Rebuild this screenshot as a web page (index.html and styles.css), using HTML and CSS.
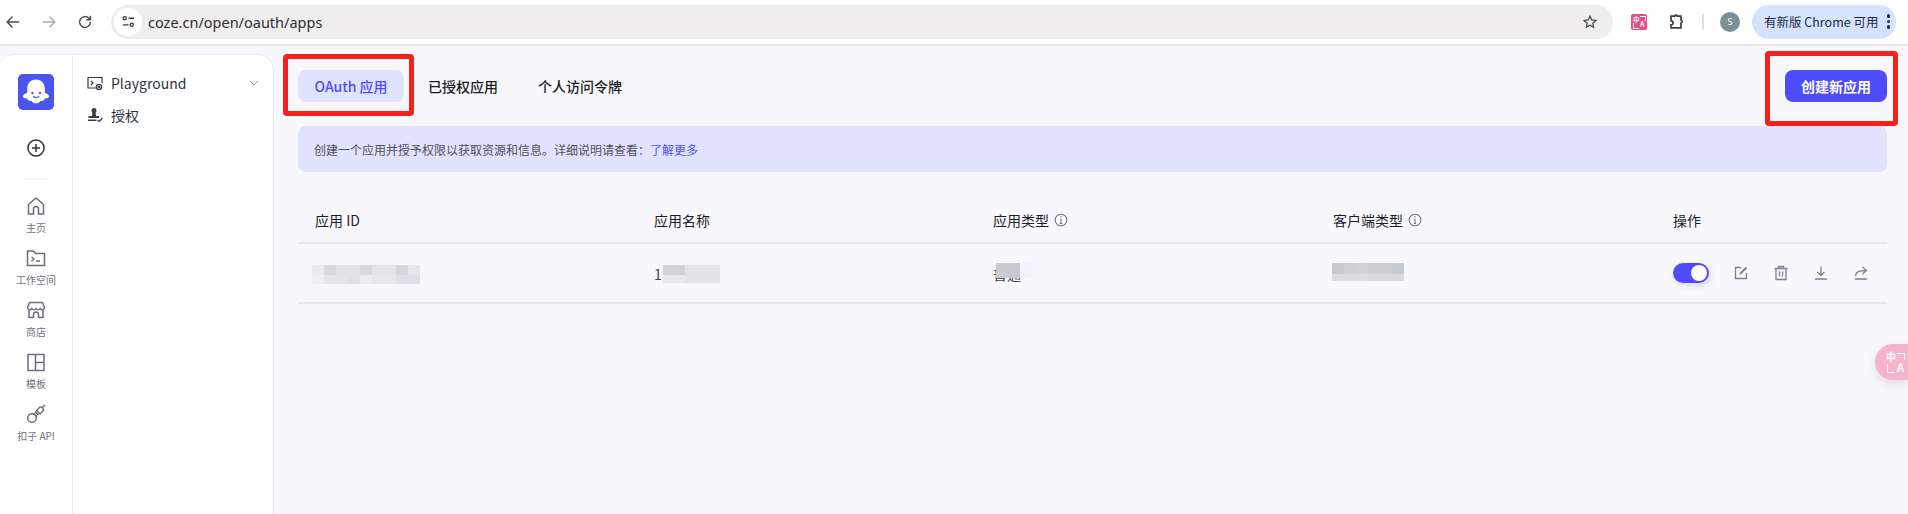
FILE: index.html
```html
<!DOCTYPE html>
<html lang="zh-CN">
<head>
    <meta charset="UTF-8">
    <title>coze.cn/open/oauth/apps</title>
    <link rel="stylesheet" href="styles.css">
</head>
<body>
    <header class="toolbar">
        <svg class="tb-icon first" viewBox="0 0 20 20"><path d="M17 10H4M9.500 4 3.500 10l6 6"/></svg>
        <svg class="tb-icon dim" viewBox="0 0 20 20"><path d="M3 10h13M10.500 4l6 6-6 6"/></svg>
        <svg class="tb-icon" viewBox="0 0 20 20"><path d="M16 10a6 6 0 1 1-1.800-4.300L16 7.500M16 3v4.500h-4.500"/></svg>
        <div class="omnibox">
            <span class="site-btn">
                <svg viewBox="0 0 16 16"><circle cx="4" cy="4.500" r="1.700"/><path d="M8 4.500h6M2 11.500h6"/><circle cx="11.500" cy="11.500" r="1.700"/></svg>
            </span>
            <span class="url">coze.cn/open/oauth/apps</span>
            <svg class="star" viewBox="0 0 20 20"><path d="m10 2.800 2.200 4.700 5.100.6-3.800 3.500 1 5.100-4.500-2.600-4.500 2.600 1-5.100-3.800-3.500 5.100-.6z"/></svg>
        </div>
        <span class="ext-pink tr-icon"><b>中</b><i>A</i></span>
        <svg class="tb-icon puzzle" viewBox="0 0 20 20"><path d="M4.500 3.500h4a1.600 1.600 0 0 1 3 0h4v4.200a1.900 1.900 0 0 1 0 3.600v5.200H4.500v-3.300a2.200 2.200 0 0 0 0-4.400z"/></svg>
        <span class="tb-divider"></span>
        <span class="avatar">S</span>
        <div class="update-pill">
            <span>有新版 Chrome 可用</span>
            <span class="dots"><i></i><i></i><i></i></span>
        </div>
    </header>

    <div class="page">
        <nav class="rail">
            <span class="logo">
                <svg viewBox="0 0 36 36">
                    <path class="ghost" d="M18 5.500c-5.500 0-8.800 4-8.800 9v4.300c-1.600 1-4.400 1.800-4.200 3.800.2 1.700 2.500 2 4.100 1.700.4 2.200 2.500 3.100 4.100 2.400 1 1.500 3.300 2.800 4.800 2.800s3.800-1.300 4.800-2.800c1.600.7 3.700-.2 4.100-2.400 1.600.3 3.900 0 4.100-1.700.2-2-2.600-2.800-4.200-3.800v-4.300c0-5-3.300-9-8.800-9z"/>
                    <circle class="eye" cx="14.500" cy="19" r="1.200"/>
                    <circle class="eye" cx="22" cy="19" r="1.200"/>
                    <path class="smile" d="M15.500 22.500c1.500 1.400 3.800 1.400 5.300 0"/>
                </svg>
            </span>
            <svg class="plus" viewBox="0 0 20 20"><circle cx="10" cy="10" r="8"/><path d="M10 6v8M6 10h8"/></svg>
            <span class="rail-sep"></span>
            <a class="rail-item">
                <svg viewBox="0 0 20 20"><path d="M2.500 8.500 10 2l7.500 6.500V18H12.500v-5a2.500 2.500 0 0 0-5 0v5H2.500z"/></svg>
                <span>主页</span>
            </a>
            <a class="rail-item">
                <svg viewBox="0 0 20 20"><path d="M1.500 3h6l2 2.500h9V17.500h-17zM5.500 9l2.500 2-2.500 2M10 13h4"/></svg>
                <span>工作空间</span>
            </a>
            <a class="rail-item">
                <svg viewBox="0 0 20 20"><path d="M3.500 2.500h13l2 5a2.300 2.300 0 0 1-4.300 1 2.400 2.400 0 0 1-4.200 0 2.400 2.400 0 0 1-4.200 0 2.300 2.300 0 0 1-4.300-1zM3 10v7.500h4.500v-3a2.500 2.500 0 0 1 5 0v3H17V10"/></svg>
                <span>商店</span>
            </a>
            <a class="rail-item">
                <svg viewBox="0 0 20 20"><path d="M2 2.500h16v16H2zM9.500 2.500v16M9.500 10.500H18"/></svg>
                <span>模板</span>
            </a>
            <a class="rail-item">
                <svg viewBox="0 0 20 20"><circle cx="6" cy="14" r="4.300"/><path d="M7.500 9 11 12.500M9 7.500l3.500 3.500M10.500 6.500 14 3a3.200 3.200 0 0 1 3.500 3.500L14 10zM16.500 3.500 19 1"/></svg>
                <span>扣子 API</span>
            </a>
        </nav>

        <aside class="subnav">
            <a class="sub-item">
                <svg viewBox="0 0 16 16"><path d="M9 13H1V2.500h14V8M4 6l2 2-2 2"/><circle cx="12" cy="12" r="2.700"/><circle class="hub" cx="12" cy="12" r=".9"/></svg>
                <span>Playground</span>
                <svg class="chevron" viewBox="0 0 12 12"><path d="m2 4 4 4 4-4"/></svg>
            </a>
            <a class="sub-item">
                <svg class="stamp" viewBox="0 0 16 16"><circle cx="7" cy="3.500" r="2.500"/><path d="M5.500 5h3l.5 4h3v2H1.500V9H5zM1 12.500h8.500v1.500H1z"/><path class="tick" d="m10.500 13 1.700 1.500L15.500 11"/></svg>
                <span>授权</span>
            </a>
        </aside>

        <main class="content">
            <div class="topbar">
                <div class="tabs">
                    <a class="tab active">OAuth 应用</a>
                    <a class="tab">已授权应用</a>
                    <a class="tab">个人访问令牌</a>
                </div>
                <button class="create-btn">创建新应用</button>
            </div>

            <div class="notice">创建一个应用并授予权限以获取资源和信息。详细说明请查看：<a>了解更多</a></div>

            <div class="table-row table-head">
                <div>应用 ID</div>
                <div>应用名称</div>
                <div class="with-info">应用类型
                    <svg class="info" viewBox="0 0 12 12"><circle cx="6" cy="6" r="5"/><path d="M6 5.200V9M5 9h2M5.200 5.200H6"/><circle class="dot" cx="6" cy="3.200" r=".6"/></svg>
                </div>
                <div class="with-info">客户端类型
                    <svg class="info" viewBox="0 0 12 12"><circle cx="6" cy="6" r="5"/><path d="M6 5.200V9M5 9h2M5.200 5.200H6"/><circle class="dot" cx="6" cy="3.200" r=".6"/></svg>
                </div>
                <div>操作</div>
            </div>

            <div class="table-row table-body">
                <div><span class="mosaic mosaic-id"></span></div>
                <div class="low-cell">1<span class="mosaic mosaic-name"></span></div>
                <div class="low-cell type-cell">普通<span class="mosaic mosaic-type"></span></div>
                <div><span class="mosaic mosaic-client"></span></div>
                <div class="actions">
                    <span class="toggle"></span>
                    <svg viewBox="0 0 16 16"><path d="M8 2.500H2.500v11h11V8"/><path class="pen" d="M7 9l6.500-6.500"/></svg>
                    <svg viewBox="0 0 16 16"><path d="M1.500 3.500h13M5.500 3.500V1.500h5v2M3 3.500v11h10v-11M6.500 6.500v5M9.500 6.500v5"/></svg>
                    <svg viewBox="0 0 16 16"><path d="M8 1.500v8.500M4.500 7 8 10.500 11.500 7M2 14h12"/></svg>
                    <svg viewBox="0 0 16 16"><path d="M2 14h12M2.500 11c0-3.500 3-5.500 10-5.500M9.500 2l4 3.500-4 3.500"/></svg>
                </div>
            </div>
        </main>
    </div>

    <span class="mark mark-tab"></span>
    <span class="mark mark-btn"></span>
    <span class="float-translate tr-icon"><b>中</b><i>A</i></span>
</body>
</html>
```

FILE: styles.css
```css
* {
    box-sizing: border-box;
}
html, body {
    height: 100%;
}
body {
    margin: 0;
    background: #f7f7fc;
    font-family: "Noto Sans CJK SC", "Noto Sans", sans-serif;
    color: #1c1d23;
    overflow: hidden;
}

/* browser chrome */
.toolbar {
    height: 46px;
    padding: 5px 12px 6px 4px;
    display: flex;
    align-items: center;
    background: #fff;
    border-bottom: 2px solid #e6e6e8;
}
.tb-icon {
    width: 18px;
    height: 18px;
    margin: 0 9px;
    flex: none;
    fill: none;
    stroke: #4a4c50;
    stroke-width: 1.6;
}
.tb-icon.first {
    margin-left: 0;
}
.tb-icon.dim {
    stroke: #a9abaf;
}
.omnibox {
    flex: 1;
    height: 34px;
    margin-left: 8px;
    padding: 0 15px 0 3px;
    display: flex;
    align-items: center;
    background: #efedee;
    border-radius: 17px;
}
.site-btn {
    width: 28px;
    height: 28px;
    display: flex;
    align-items: center;
    justify-content: center;
    background: #fff;
    border-radius: 50%;
}
.site-btn svg {
    width: 15px;
    height: 15px;
    fill: none;
    stroke: #3c3e42;
    stroke-width: 1.4;
}
.url {
    margin-left: 6px;
    flex: 1;
    font-family: "Noto Sans", sans-serif;
    font-size: 14.500px;
    color: #2c2e32;
}
.star {
    width: 16px;
    height: 16px;
    fill: none;
    stroke: #45474b;
    stroke-width: 1.600;
}

/* translate icon: text plus two corner brackets */
.tr-icon {
    color: #fff;
    line-height: 1;
}
.tr-icon b,
.tr-icon i {
    position: absolute;
    font-family: "Noto Sans CJK SC", sans-serif;
    font-style: normal;
    font-weight: 700;
}
.tr-icon::before,
.tr-icon::after {
    content: "";
    position: absolute;
    border: 0 solid #fff;
}
.ext-pink {
    position: relative;
    width: 16px;
    height: 16px;
    margin-left: 18px;
    flex: none;
    background: #ea4c89;
    border-radius: 2px;
}
.ext-pink b {
    left: 2px;
    top: 2px;
    font-size: 6.500px;
}
.ext-pink i {
    left: 9px;
    top: 7px;
    font-size: 7px;
}
.ext-pink::before {
    left: 9px;
    top: 2px;
    width: 5px;
    height: 4px;
    border-width: 1px 1px 0 0;
}
.ext-pink::after {
    left: 2px;
    top: 9px;
    width: 5px;
    height: 5px;
    border-width: 0 0 1px 1px;
}
.tb-icon.puzzle {
    margin: 0 0 0 20px;
    stroke: #3c3e42;
    stroke-width: 1.900;
}
.tb-divider {
    width: 2px;
    height: 16px;
    margin-left: 17px;
    flex: none;
    background: #dfe0e2;
}
.avatar {
    width: 20px;
    height: 20px;
    margin-left: 16px;
    flex: none;
    display: flex;
    align-items: center;
    justify-content: center;
    background: #78909c;
    border-radius: 50%;
    color: #fff;
    font-family: "Noto Sans", sans-serif;
    font-size: 9px;
}
.update-pill {
    width: 144px;
    height: 34px;
    margin-left: 12px;
    padding: 0 6px 0 12px;
    flex: none;
    display: flex;
    align-items: center;
    justify-content: space-between;
    background: #d3e3fd;
    border-radius: 17px;
    font-size: 12.500px;
    color: #1d2a44;
    white-space: nowrap;
}
.dots {
    display: flex;
    flex-direction: column;
    gap: 2px;
}
.dots i {
    width: 3.500px;
    height: 3.500px;
    background: #1d2a44;
    border-radius: 50%;
}

/* page */
.page {
    height: 468px;
    padding-top: 8px;
    display: flex;
}
.rail {
    width: 73px;
    padding-top: 19px;
    display: flex;
    flex-direction: column;
    align-items: center;
    background: #fff;
    border-top: 1px solid #ebebf3;
    border-right: 1px solid #e9e9f2;
    border-top-left-radius: 14px;
}
.logo {
    width: 36px;
    height: 36px;
    background: #4c54f0;
    border-radius: 5px;
}
.logo svg {
    display: block;
}
.ghost {
    fill: #fff;
}
.eye {
    fill: #4c54f0;
}
.smile {
    fill: none;
    stroke: #4c54f0;
    stroke-width: 1.200;
    stroke-linecap: round;
}
.plus {
    width: 20px;
    height: 20px;
    margin-top: 28px;
    fill: none;
    stroke: #2e3038;
    stroke-width: 1.500;
}
.rail-sep {
    width: 24px;
    height: 1px;
    margin: 21px 0 16px;
    background: #e9e9f0;
}
.rail-item {
    height: 52px;
    display: flex;
    flex-direction: column;
    align-items: center;
    font-size: 10px;
    line-height: 14px;
    color: #70727c;
    white-space: nowrap;
}
.rail-item svg {
    width: 20px;
    height: 20px;
    margin-bottom: 5px;
    fill: none;
    stroke: #6b6e80;
    stroke-width: 1.500;
}
.subnav {
    width: 201px;
    padding: 12px 13px 0 14px;
    background: #fff;
    border-top: 1px solid #ebebf3;
    border-right: 1px solid #e9e9f2;
    border-top-right-radius: 16px;
}
.sub-item {
    height: 32px;
    display: flex;
    align-items: center;
    gap: 8px;
    font-size: 14px;
    color: #2f3240;
}
.sub-item svg {
    width: 16px;
    height: 16px;
    flex: none;
    fill: none;
    stroke: #3a3c46;
    stroke-width: 1.200;
}
.sub-item .hub {
    fill: #3a3c46;
}
.sub-item .stamp {
    fill: #3a3c46;
    stroke: none;
}
.sub-item .tick {
    fill: none;
    stroke: #3a3c46;
    stroke-width: 1.200;
}
.sub-item .chevron {
    width: 12px;
    height: 12px;
    margin-left: auto;
    stroke: #9a9ca6;
    stroke-width: 1;
}
.content {
    flex: 1;
    padding: 16px 21px 0 24px;
}
.topbar {
    display: flex;
    justify-content: space-between;
    align-items: center;
}
.tabs {
    display: flex;
    gap: 8px;
}
.tab {
    height: 32px;
    padding: 0 16px;
    display: flex;
    align-items: center;
    border-radius: 8px;
    font-size: 14px;
    font-weight: 500;
    color: #1c1d23;
}
.tab.active {
    padding: 0 16.500px;
    background: #e0e3fd;
    color: #4d4dff;
}
.create-btn {
    height: 32px;
    padding: 0 16px;
    border: none;
    background: #4f4bff;
    border-radius: 8px;
    color: #fff;
    font: 700 14px "Noto Sans CJK SC", sans-serif;
}
.notice {
    height: 46px;
    margin-top: 24px;
    padding: 0 16px;
    display: flex;
    align-items: center;
    background: #e0e3fd;
    border-radius: 8px;
    font-size: 12px;
    color: #4d4f59;
}
.notice a {
    color: #4d4dff;
}
.table-row {
    display: grid;
    grid-template-columns: 339px 339px 340px 340px 1fr;
    border-bottom: 2px solid #e6e6ee;
}
.table-row > div {
    padding-left: 17px;
    display: flex;
    align-items: center;
}
.table-head {
    height: 72px;
    padding-top: 26px;
    font-size: 14px;
}
.with-info {
    gap: 5px;
}
.info {
    width: 14px;
    height: 14px;
    fill: none;
    stroke: #6f7180;
    stroke-width: .9;
}
.info .dot {
    fill: #6f7180;
    stroke: none;
}
.table-body {
    height: 60px;
    font-size: 14px;
    color: #3c3e48;
}
.table-row > .low-cell {
    padding-top: 2px;
}
.mosaic {
    display: block;
    height: 18px;
}
.mosaic-id {
    width: 108px;
    height: 19px;
    margin-left: -3px;
    margin-top: 3px;
    background:
        linear-gradient(90deg, #ebebf0 12px, #d8d8de 12px 24px, #e1e1e7 24px 48px, #d8d8de 48px 60px, #e4e4ea 60px 84px, #d6d6dd 84px 96px, #e6e6eb 96px) top / 100% 10px no-repeat,
        linear-gradient(90deg, #efeff3 12px, #e4e4e9 12px 36px, #e0e0e6 36px 48px, #ececf0 48px 60px, #e6e6eb 60px 84px, #e0e0e6 84px) bottom / 100% 9px no-repeat;
}
.mosaic-name {
    width: 57px;
    margin-left: 1px;
    background:
        linear-gradient(90deg, #d2d2d9 22px, #e2e2e8 22px) top / 100% 10px no-repeat,
        linear-gradient(90deg, #e8e8ed 22px, #e2e2e7 22px) bottom / 100% 8px no-repeat;
}
.type-cell {
    position: relative;
}
.mosaic-type {
    position: absolute;
    left: 20px;
    top: 19px;
    width: 36px;
    height: 15px;
    background: linear-gradient(90deg, #c9c9d0 24px, #f0f3fb 24px);
}
.mosaic-client {
    width: 72px;
    margin-left: -1px;
    margin-top: -2px;
    background:
        linear-gradient(90deg, #c8c8cf 12px, #cfcfd6 12px 24px, #d2d2d8 24px 36px, #cdcdd4 36px 60px, #c6cad2 60px) top / 100% 11px no-repeat,
        linear-gradient(90deg, #dcdce1 36px, #d9d9df 36px) bottom / 100% 7px no-repeat;
}
.actions {
    gap: 24px;
}
.actions svg {
    width: 16px;
    height: 16px;
    fill: none;
    stroke: #7d7f90;
    stroke-width: 1.300;
}
.actions .pen {
    stroke-width: 1.800;
}
.toggle {
    position: relative;
    width: 36px;
    height: 20px;
    background: #4f4bff;
    border-radius: 10px;
    box-shadow: 2px 3px 6px rgba(0, 0, 0, .12);
}
.toggle::after {
    content: "";
    position: absolute;
    top: 2px;
    right: 2px;
    width: 16px;
    height: 16px;
    background: #fff;
    border-radius: 50%;
}

/* red annotations drawn over the screenshot */
.mark {
    position: absolute;
    border: 5px solid #f5211b;
    border-radius: 4px;
}
.mark-tab {
    left: 283px;
    top: 54px;
    width: 131px;
    height: 62px;
}
.mark-btn {
    left: 1765px;
    top: 51px;
    width: 133px;
    height: 75px;
}
.float-translate {
    position: absolute;
    left: 1875px;
    top: 344px;
    width: 33px;
    height: 36px;
    background: #f5b3cc;
    border-radius: 18px 0 0 18px;
    box-shadow: 0 4px 10px rgba(0, 0, 0, .1);
}
.float-translate b {
    left: 11px;
    top: 8px;
    font-size: 10px;
}
.float-translate i {
    left: 22px;
    top: 18px;
    font-size: 11px;
}
.float-translate::before {
    left: 22px;
    top: 9px;
    width: 7px;
    height: 6px;
    border-width: 1.500px 1.500px 0 0;
}
.float-translate::after {
    left: 12px;
    top: 20px;
    width: 7px;
    height: 8px;
    border-width: 0 0 1.500px 1.500px;
}
```
